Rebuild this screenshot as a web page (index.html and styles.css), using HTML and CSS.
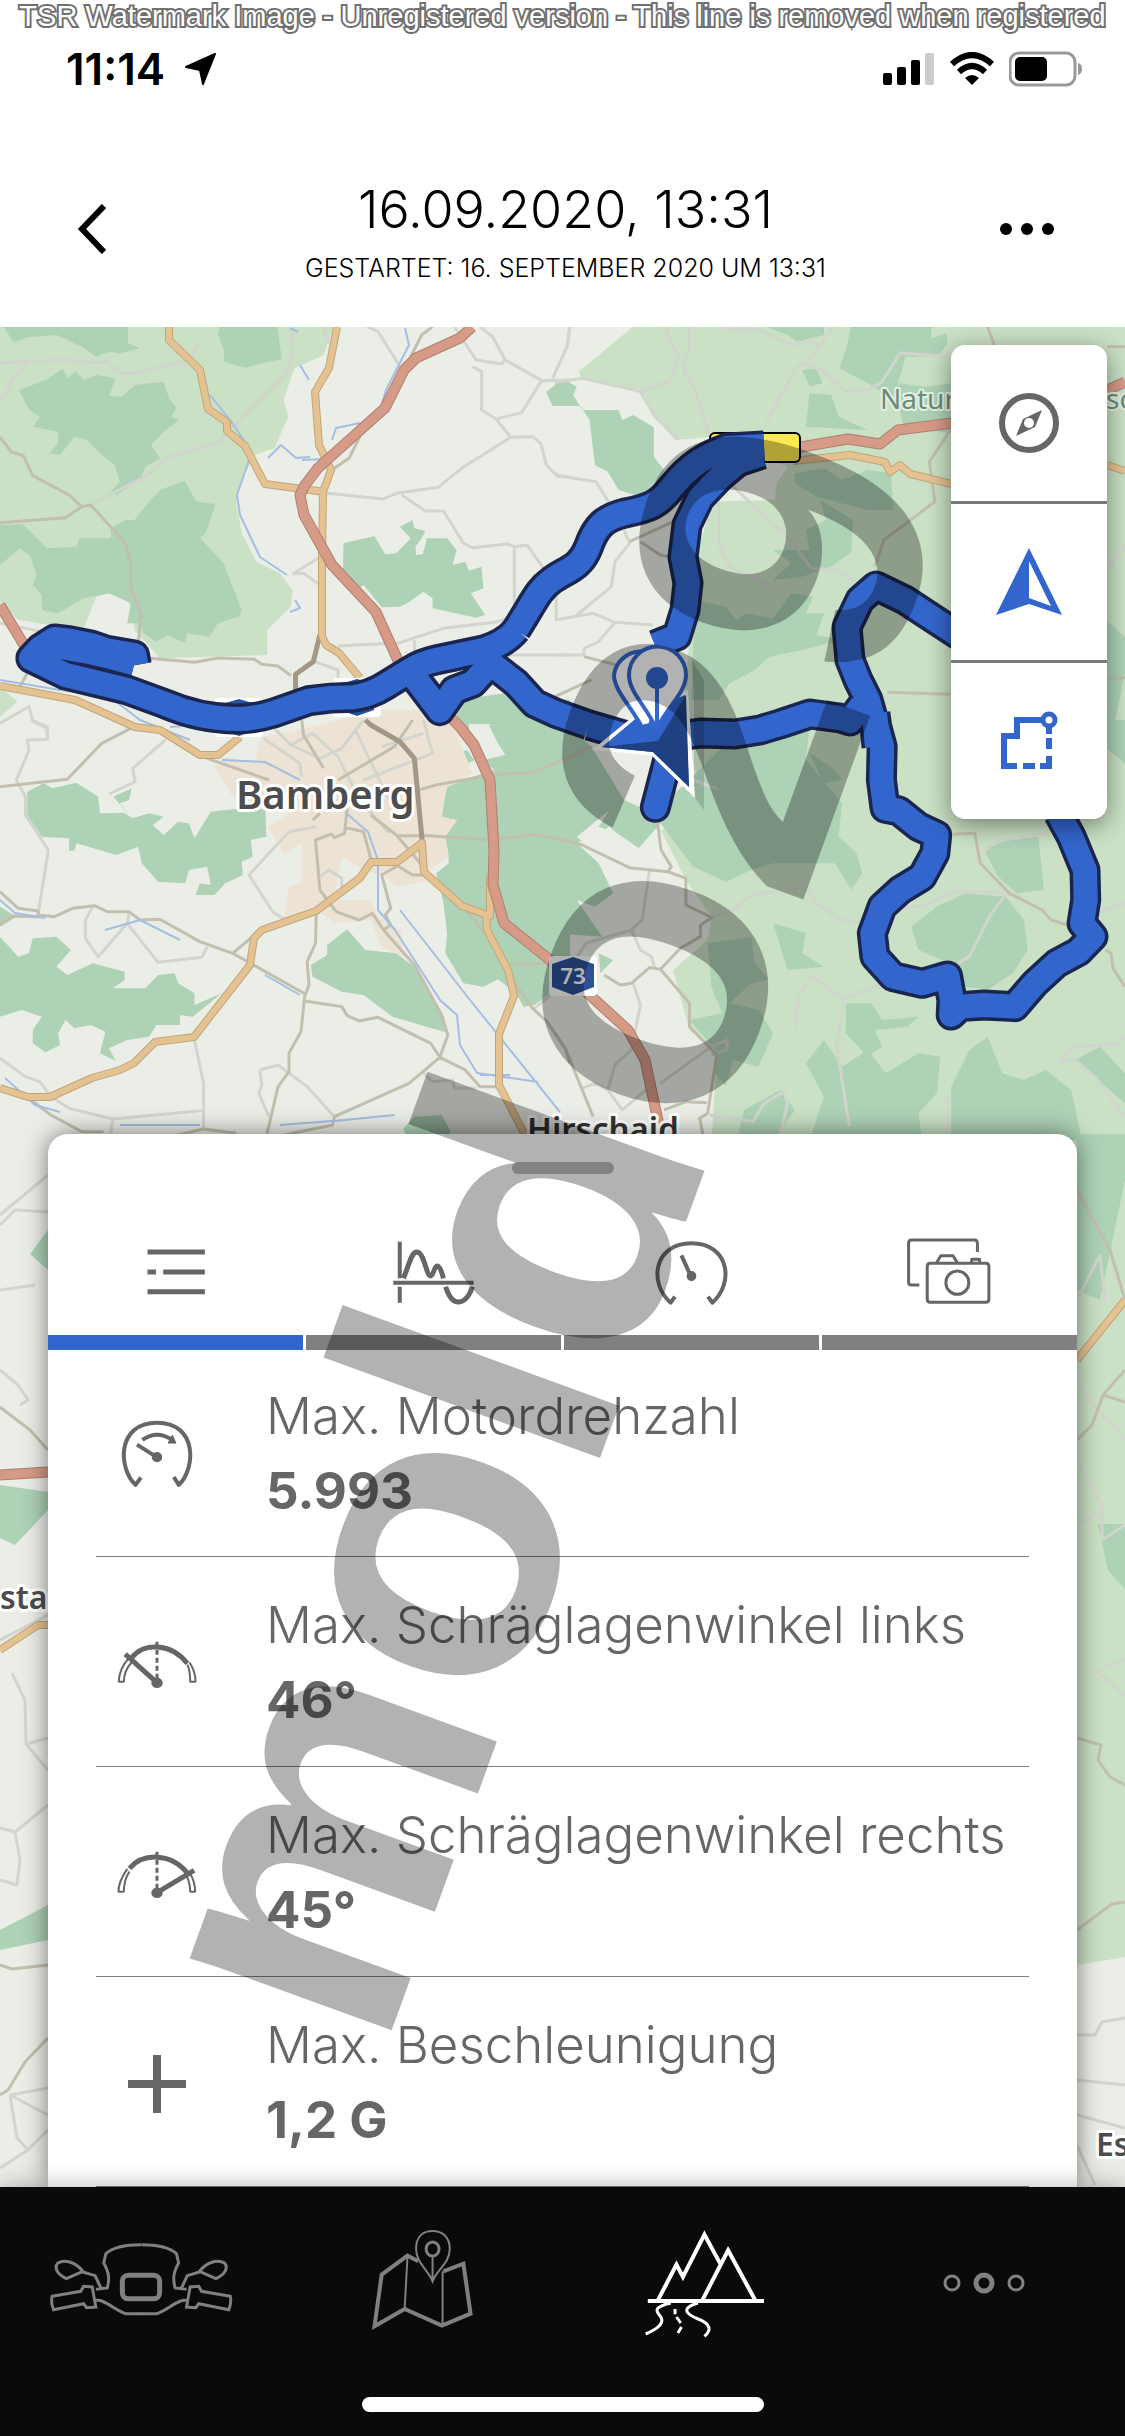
FILE: index.html
```html
<!DOCTYPE html>
<html lang="de">
<head>
<meta charset="utf-8">
<meta name="viewport" content="width=device-width, initial-scale=1">
<title>16.09.2020, 13:31</title>
<link rel="stylesheet" href="styles.css">
</head>
<body>
<p class="license">TSR Watermark Image - Unregistered version - This line is removed when registered</p>

<div class="status">
  <div class="status-side start">
    <span class="clock">11:14</span>
    <svg width="32" height="32" viewBox="0 0 32 32" aria-hidden="true"><path d="M30 1 18 31 15 17 1 14Z" stroke="#000" stroke-width="2" stroke-linejoin="round"/></svg>
  </div>
  <div class="status-side">
    <svg width="52" height="34" viewBox="0 0 52 34" aria-hidden="true"><rect y="21" width="9" height="12" rx="2"/><rect x="14" y="15" width="9" height="18" rx="2"/><rect x="28" y="8" width="9" height="25" rx="2"/><rect x="42" y="1" width="9" height="32" rx="2" fill="#ccc"/></svg>
    <svg width="46" height="34" viewBox="0 0 46 34" aria-hidden="true"><g fill="none" stroke="#000" stroke-width="6"><path d="M3 12Q23-6 43 12"/><path d="M10 20Q23 8 36 20"/></g><path d="M16 26Q23 20 30 26L23 33Z"/></svg>
    <svg width="74" height="36" viewBox="0 0 74 36" aria-hidden="true"><rect x="1" y="2" width="65" height="32" rx="9" fill="none" stroke="#999" stroke-width="3"/><rect x="6" y="6" width="32" height="24" rx="5"/><path d="M69 12Q73 13 73 18T69 24Z" fill="#999"/></svg>
  </div>
</div>

<header class="header">
  <button class="icon-btn" aria-label="Zurück"><svg width="30" height="50" viewBox="0 0 30 50"><path d="M28 2 6 25 28 48" fill="none" stroke="#000" stroke-width="6"/></svg></button>
  <div class="heading">
    <h1>16.09.2020, 13:31</h1>
    <p>GESTARTET: 16. SEPTEMBER 2020 UM 13:31</p>
  </div>
  <button class="icon-btn" aria-label="Mehr"><svg width="56" height="14" viewBox="0 0 56 14"><circle cx="7" cy="7" r="6"/><circle cx="28" cy="7" r="6"/><circle cx="49" cy="7" r="6"/></svg></button>
</header>

<main class="stage">
<svg class="map" viewBox="0 327 1125 1860" preserveAspectRatio="xMidYMin slice" aria-label="Karte">
  <defs>
    <g id="route">
      <g class="px" transform="translate(0 320) scale(.3635 .3333)">
        <path d="M375 1035 370 1005 290 990 250 975 190 962 150 957 110 985 85 1015 180 1065 350 1110 450 1150Q550 1197 650 1197 700 1197 750 1180L850 1142Q910 1132 970 1132 1020 1125 1060 1097L1130 1050Q1160 1030 1200 1020L1330 990Q1390 970 1420 930"/>
        <path d="M110 1000 150 978 240 995 300 1010 370 1030"/>
        <path d="M1125 1050 1210 1172 1250 1110 1300 1090 1350 1030 1420 1090 1470 1150 1530 1180 1620 1215"/>
      </g>
      <g class="px">
        <path d="M516 630C535 600 538 590 552 580 566 570 580 568 588 548 596 525 605 518 625 513 650 508 658 505 672 487 690 465 705 456 727 448L764 446"/>
        <path d="M762 454 738 462 720 477 700 498 687 525 683 557 688 583 685 610 677 636 655 645"/>
        <path d="M589 725 630 737 680 736 700 733 735 734 760 730 780 724 810 714 840 718 850 721 862 705"/>
        <path d="M960 636 940 623 905 600 876 586 860 600 847 627 850 660 858 680 868 700 875 725 877 747"/>
      </g>
      <g class="px" transform="translate(555 720) scale(.3635 .3333)">
        <path d="M880-20 885 20 900 80 898 180 908 265 945 272 1000 320 1050 345 1045 400 1010 470 950 510 900 560 873 640 880 710 930 770 1010 790 1080 768 1092 840 1090 885 1115 860 1180 855 1265 860 1320 790 1380 730 1440 695 1480 650 1450 610 1460 540 1458 450 1420 350 1385 280"/>
        <path d="M310 120 276 262" stroke-linecap="round"/>
      </g>
    </g>
  </defs>
  <rect y="327" width="1125" height="1860" fill="#ebeee7"/>

  <g transform="translate(0 320) scale(.3635 .3333)">
    <path class="meadow" d="M0 20H918L890 105 810 145 780 240 793 290 755 385 700 405 660 490 650 550 665 640 705 725 770 760 805 810 800 860 735 930V1005L440 1015 370 930 355 840 300 820 265 830 228 930 50 900 0 845ZM0 1100 48 1145 0 1190Z"/>
    <path class="forest" d="M10 20H352V70L385 85 330 100 300 95 265 110 225 80 155 45 75 52 38 68ZM605 20H763L775 118 720 130 675 143 615 125 618 95 600 45ZM52 210 125 180 172 148 188 175 207 152 230 180 265 165 318 175 300 228 335 230 370 195 450 185 465 235 485 265 470 290 493 300 455 330 415 375 440 415 400 440 385 480 320 525 305 515 330 485 315 435 275 400 240 360 205 350 165 405 135 400 160 370 160 335 90 320 110 290 80 270Z"/>
    <path class="forest" d="M0 615 62 612 130 685 210 680 218 655H305V625L345 600H370L410 545 440 510 508 482 540 545 593 552 565 640 550 653 615 730 665 870 660 888 600 910 575 950 515 940 510 970 460 945 430 965 395 940 385 910H350L360 850 300 820 230 835 160 880 115 870V825L90 795 100 765 85 710 55 685 0 735Z"/>
    <path class="forest" d="M945 670 1030 648 1060 703 1090 700 1130 655 1100 620 1135 600 1140 625 1170 632 1160 655 1143 680 1145 705 1163 703 1175 655H1230L1256 690 1245 735 1280 725 1290 752 1325 740 1330 805 1295 820 1335 885 1310 893 1190 865V835L1165 815 1120 850 1100 860 1050 862 1000 795 970 818 943 795ZM1502 215 1540 185H1568V258H1520ZM1250 1170 1290 1135 1390 1120 1568 1140V1260H1390V1212H1290L1290 1260Z"/>
  </g>
  <g transform="translate(555 320) scale(.3635 .3333)">
    <path class="meadow" d="M215 20H1568V1270H350L370 940 390 700 430 560 420 545 605 540 610 490 640 440 430 350 330 360 275 290 240 215 75 175 65 155Z"/>
    <path class="forest" d="M0 190 40 188 60 200 50 225 75 270H175L185 300 215 285 272 322V410L300 450 290 470 235 530 175 510 145 455 110 435 95 300 70 258H0ZM585 22H740V45L665 65 640 45ZM815 20H1035V55L1078 40 1080 70 1060 100 1020 110 965 110 945 185 935 240 860 190 783 145 800 90ZM680 150 720 145 735 190 700 200ZM700 220 760 225 780 290 860 330 690 320ZM945 190 1020 200 1089 190V340L960 320 940 240Z"/>
    <path class="forest" d="M660 460 740 445 790 480 860 450 925 460 930 570H860L720 530 660 490ZM730 540 820 600 815 695 760 740 680 770 600 780 650 730 600 690 700 690 690 630 745 600ZM385 840 470 860 500 900 525 880 600 895 650 820 710 830 690 880H740L720 945 790 960 680 990 590 1010 550 1050 480 1090 450 1140H375ZM1518 900 1568 950V1060L1530 1260H1518Z"/>
  </g>
  <g transform="translate(0 720) scale(.3635 .3333)">
    <path class="forest" d="M75 215 120 190 145 205 210 188 270 230 275 280 340 278 365 295 410 280 450 290 420 315 450 345 490 305 520 310 535 355 580 275 700 260 730 270 733 350 690 360 695 410 665 425 668 465 620 490 590 525H538L550 490 580 495 570 440 520 450 510 490 435 485 390 430 380 380 320 405 210 370 205 392H190V355L115 350 75 285ZM312 230 362 205 355 240 330 250 360 290Z"/>
    <path class="forest" d="M0 650 50 710 80 700 90 655 155 650 195 690 155 740 185 765 255 730 343 755V780L310 805H400L435 765 480 760 490 790 535 820V855L610 820 530 890 495 885V915H430L410 950 350 960 300 985 318 1022 275 1000 290 935 250 915 205 925 180 900 160 940 165 975 125 997 90 970V930L115 890 60 870 0 890ZM0 560 45 590 0 620Z"/>
    <path class="forest" d="M855 735 900 705V675L955 628 1005 690 1090 700 1140 740 1215 890 1225 937 1080 890 1000 825 940 815 860 770ZM1110 1225 1140 1190 1215 1185 1240 1235 1230 1260H1120ZM1568 0H1390L1345 15 1370 70 1390 105 1330 120 1360 150 1300 170 1230 200 1215 270V350L1230 380 1235 430 1200 460 1220 550 1230 640 1225 700 1275 790 1330 800 1370 778 1420 820 1440 860 1470 855 1515 820 1568 760ZM1258 100 1285 90 1305 120 1280 135Z"/>
    <path class="town" d="M720 50 800 35 930 0 1020-30 1230-30 1300 160 1230 200 1215 290 1258 300 1225 350 1235 410 1180 450 1190 480 1090 500 1060 470 1000 450 940 410 930 470 920 540H1020L1040 590 1105 630 1110 710 1050 680 1020 600 920 610 860 560 780 600 795 500 830 490V370L780 400 735 320 800 280 640 230 590 140 620 110 700 130Z"/>
  </g>
  <g transform="translate(555 720) scale(.3635 .3333)">
    <path class="meadow" d="M350 0H1568V1280H430L445 1000 370 930 325 750 420 660 430 590 360 480 290 330 420 300Z"/>
    <path class="forest" d="M0-20 100 80 190 240 290 255 350 200 500 40 700 20 690 120 790 250 780 350 830 400 845 460 815 510 770 430 600 430 540 450 470 485 380 440 290 310 230 385 170 340 150 320 60 370 120 430 160 520 110 560 60 540 0 530ZM700 100 760 140 790 180 740 190Z"/>
    <path class="forest" d="M420 670 540 650 550 730 590 780 540 790 480 850 560 870 600 940 560 1040 490 1020 470 1100 440 1060 450 1000 370 900 460 880 430 800ZM600 610 690 640 680 700 740 740 640 750ZM1180 390 1240 360 1330 350 1345 510 1270 520 1220 470ZM980 620 1050 560 1130 520 1240 530 1290 600 1300 690 1260 760 1190 810 1130 800 1110 740 1000 690ZM800 850 870 850 900 900 1000 890 970 920 880 930 900 980 860 1010 800 940ZM690 1030 740 960 790 1040 860 990 910 1060 1000 1000 1060 1010 1050 1120 1000 1180 1010 1260H700L740 1130ZM1090 1100 1140 990 1190 950 1230 1060 1290 1080 1350 1050 1420 1110 1450 1260H1090ZM1430 1020 1500 980 1568 1060V1150ZM520 1170 620 1110 660 1170 600 1260H500ZM1490 0H1568V130L1510 80Z"/>
    <path class="land" d="M190 240 230 140 300 180 310 260 250 270ZM60 350 150 270 120 320 170 340 230 385 290 330 360 480 200 440 130 410Z"/>
    <path class="forest" d="M120 700 160 720 125 760ZM0 530 60 540 130 650 0 640Z"/>
  </g>
  <path class="meadow" d="M1077 1134H1125V1957L1077 1965Z"/>
  <path class="forest" d="M1077 1134H1125V1180L1100 1300 1077 1290ZM1098 1524H1125V1590L1108 1570ZM0 1485 48 1492V1510L15 1545 0 1538ZM0 1930 48 1905V1940L0 1950ZM30 1254 48 1230V1270Z"/>

  <g class="px minor" transform="translate(0 320) scale(.3635 .3333)">
    <path d="M0 130 180 118 265 130 295 125 335 160 370 160 520 120 545 75M80 130 40 165 15 225 0 235M255 550 400 470 465 410 600 370 640 320 790 160 805 90 800 20M890 20 905 70M1010 20 1040 35 1095 130M1250 20 1310 120 1380 132 1390 120 1355 50 1320 20M1300 140 1325 155V270L1365 297 1435 278 1490 182 1390 120M1490 182 1568 180M1520 175 1560 80 1568 20M1365 297 1405 352 1270 445 1205 502 1090 520 1055 537 900 520M1405 352 1465 350 1488 370 1503 435 1535 470H1568M1105 525 1170 573H1220L1275 670 1300 683 1395 672 1415 680V890M1415 680 1450 675 1530 800V900M805 762 875 715M805 762 835 760 880 795M930 978 1100 968 1220 925 1360 907 1450 880M1140 960V1010M1370 1005H1568M0 910 130 938M865 1025 930 1050V1080M0 1210 80 1160 90 1205 130 1225V1260"/>
    <path class="lane" d="M0 350 30 395 65 408 90 467 190 525 225 560 250 555 345 670 360 730V805L388 880 380 980M0 608 180 593 225 560M405 1014 535 1027 600 1014 700 1018 720 1033 765 1038 800 1067M75 1060 50 1110M990 350 960 415 900 460M1190 20 1160 45 1130 110"/>
    <path class="trunk" d="M880 945 862 1025 813 1063V1110"/>
  </g>
  <g class="px minor" transform="translate(555 320) scale(.3635 .3333)">
    <path d="M40 20 35 75 0 160M0 187 75 175 235 215 320 180 340 110 300 20M368 20V100L352 120 360 165 385 210 425 350M235 215 275 290 340 360M470 25 560 30 650 75 710 65 735 85M765 20 720 90 660 150 580 310M680 130 740 155 800 215 860 210 900 185 950 98 1090 110M0 460 15 468 112 485 150 550M0 900 105 880 165 907 270 915M165 907 120 965 80 985V1005M0 1005H80M190 630 205 670 165 725 155 800 60 885M450 520V670L480 740 600 800M480 490 640 650 705 745 770 750 820 780M1519 750 1568 680"/>
    <path class="lane" d="M205 665 325 605M235 665 290 705 315 710M80 1010 170 1035M0 1130 100 1080M1190 20 1208 75M1519 80H1568M1088 330 1030 425 1045 545 905 660 880 740M915 1117 1089 1123M1519 1078 1568 1073"/>
  </g>
  <g class="px minor" transform="translate(0 720) scale(.3635 .3333)">
    <path d="M85 0 130 20V58L75 60 80 90 45 180 70 230V285L133 390 105 580M455 60 365 145 372 185 300 222M255 560 235 600V655L270 710 350 610 435 727 555 712 570 680M350 610 355 580M535 960 560 1090V1230M0 1015 70 1070 110 1085 140 1130 190 1165 310 1197 555 1172M310 1197 305 1240M870 320 795 335 685 465 750 575 785 600M715 1050 765 1035 845 1100 920 1190M715 1050 720 1095 712 1120 740 1190M725 55 825 130 830 170M755 25 800 75 880 115 940 85 1000 0M800 75 860 40 930 110 990 240 1070 340M1165 0 1190 100 1000 180M980 35 1070 240M1165 40 1050 80M880 470 905 450 940 475V520M1165 1060 1190 1085 1245 1080 1250 1105H1310M1470 865 1515 825"/>
    <path class="lane" d="M0 200 185 178 280 70 360 25M570 115 740 180M830 0 835 45 890 145M0 515 50 565 105 573V590L35 588 0 615M105 585 150 590 200 565 260 557 295 575H355L385 600 440 598 550 665 640 700 840 822M640 700 700 645M870 580 868 670 845 725 850 795 838 830 828 935 795 1000V1055L765 1100 735 1240M838 843 940 860 955 887 988 903 1040 892 1185 970 1210 1012 1280 1050 1320 1100H1375M1210 1012 1125 1090 920 1190 915 1215 780 1245M1210 1012 1232 945 1215 885 1140 735 1055 630 1025 580 988 600 925 575 880 510 868 360 912 342 920 353 948 340 955 265M1055 630 1075 615 1060 585 1075 565 1050 465 1090 440M1135 0 1085 80 930 180M1135 215 1200 195 1350 165 1465 157 1568 110M1090 347H1180L1350 360 1470 343 1568 365M1020 285 1090 345 1165 440M1020 415 1000 335 945 322M1090 435 1135 465H1175M1280 570 1335 640M1400 733 1520 730M1410 780 1465 865 1505 905 1555 985 1568 1030M85 1140 140 1185 225 1235H285M490 1245 560 1227 650 1240M860 300 880 280"/>
    <path class="trunk" d="M1005 0 1020 15 1100 65 1140 115 1162 370"/>
  </g>
  <g class="px minor" transform="translate(555 720) scale(.3635 .3333)">
    <path d="M260 450 240 600 210 630 85 670 55 720M210 630 235 690 265 710 275 745M215 790 235 855 210 990 165 1035 145 1110 185 1170 250 1110M75 1105 110 1090 145 1110M290 1090 430 980 475 960 470 990 430 1005M430 590 490 570 540 525 690 500 720 550 780 597 850 610M960 565 1020 555 1105 512 1245 518 1200 580 1140 710 1110 730M705 770 795 835 775 980 810 1220M705 770 670 830 660 925M795 835 890 795M1180 395 1210 365 1350 340M1500 575 1568 550M425 1185 545 1205 575 1150 630 1115 640 1150 620 1240M1085 1130 1080 1240M1390 1025 1420 980 1550 970 1568 950M1390 1025 1425 1015 1490 1075 1568 1190M380 180 450 208"/>
    <path class="lane" d="M0 130 100 80M282 310 292 390 320 440 310 455M0 355 75 375 205 443 310 455 360 475V555L432 593 400 615V650L345 685 290 748 260 743 210 790 180 795 135 765M290 748 370 850V920L445 1005 420 1180 398 1195 408 1250M0 940 30 990 105 1190M300 1170 360 1145 418 1148M1095 343 1155 340 1170 430 1250 520 1340 570 1365 600 1410 615M1515 690 1530 700 1535 745 1568 800"/>
  </g>
  <g class="px minor">
    <path d="M48 1175 0 1215M0 1225 15 1210 48 1212M0 1290 35 1285M0 1370 18 1385 28 1400 20 1405M0 1640 48 1615M12 1673 25 1700 26 1744 48 1738M26 1744 48 1770M0 1828 15 1832 48 1805M15 1832 20 1860 17 1885 0 1880M10 2095 48 2088M10 2095 17 2138 28 2150 48 2130M10 2095 48 2115M28 2150 0 2168M1077 1462 1102 1505V1540L1125 1525M1102 1510 1077 1525M1096 1671 1125 1660M1096 1671 1125 1695M1077 2035H1095L1102 2022 1125 2018M1077 2080 1125 2085M1077 2115 1125 2128M1077 2145 1095 2185M1077 1300 1100 1255 1105 1300M1077 1385 1125 1440"/>
    <path class="lane" d="M0 1407 30 1430 48 1450M48 2038 25 2062 8 2090 0 2095M0 1965 12 1969 48 1965M1077 1440 1092 1425 1103 1395 1125 1370M1103 1395 1125 1402M1077 1190 1110 1250 1125 1300M1077 1738 1101 1745 1098 1760 1110 1777 1125 1785M1077 1930 1112 1904 1125 1902"/>
  </g>

  <g class="px water">
    <path d="M210 395 230 420 245 442M249 460 237 495 240 515 260 557 287 575M302 460 325 459M290 328 298 332M300 365 309 380M405 328 409 345 386 390 380 410M332 440 336 428 360 423M268 458 281 445 296 458 310 457M0 680 60 690 110 697 140 720 190 740M170 727 210 724M295 600 300 608 290 612"/>
    <path d="M222 760 265 762 300 780M345 812 368 832 378 860V910L395 930 440 1000 457 1015 460 1045 477 1073 538 1082M400 910 470 1000 560 1112M480 1075 510 1075M120 1125H200M280 1125 345 1120 395 1115M5 1078 35 1105 60 1112M0 900 15 913 45 918M265 975 300 995M105 930 140 920 180 940"/>
  </g>
  <g class="px">
    <path id="main-roads" class="road-edge" d="M169 327V340L200 370 208 409 227 422V431L245 446 265 484 325 492M337 327 329 368 315 392 319 445 331 470 323 492 322 560V636L326 645 339 653 360 678M0 686 75 700 135 727 160 730 200 755H218L240 737M0 1088 28 1097H50L92 1078 120 1070 134 1063 155 1042 194 1037 250 965 254 938 262 930 316 911 360 878 371 862H397L422 843 424 872 462 906 490 916V875M486 913 487 930 508 970 514 996 499 1034V1085L525 1135M0 1650 38 1625H48M1077 1360 1125 1300M793 461 850 455 885 462 890 472 900 465 910 474 960 486M1107 465 1125 471"/>
    <path class="orange" d="M169 327V340L200 370 208 409 227 422V431L245 446 265 484 325 492M337 327 329 368 315 392 319 445 331 470 323 492 322 560V636L326 645 339 653 360 678M0 686 75 700 135 727 160 730 200 755H218L240 737M0 1088 28 1097H50L92 1078 120 1070 134 1063 155 1042 194 1037 250 965 254 938 262 930 316 911 360 878 371 862H397L422 843 424 872 462 906 490 916V875M486 913 487 930 508 970 514 996 499 1034V1085L525 1135M0 1650 38 1625H48M1077 1360 1125 1300M793 461 850 455 885 462 890 472 900 465 910 474 960 486M1107 465 1125 471"/>
    <path class="red-edge" d="M472 327 460 338 416 358 404 370 385 408 318 468 305 485 300 495 304 515 332 565 376 612 400 665 460 727 474 745 490 780 494 850 493 885 504 923 560 968 628 1030 645 1060 660 1130M0 605 30 655M795 448 848 439 880 444 898 430 960 422M1107 390 1125 382M0 1475 48 1472"/>
    <path class="red" d="M472 327 460 338 416 358 404 370 385 408 318 468 305 485 300 495 304 515 332 565 376 612 400 665 460 727 474 745 490 780 494 850 493 885 504 923 560 968 628 1030 645 1060 660 1130M0 605 30 655M795 448 848 439 880 444 898 430 960 422M1107 390 1125 382M0 1475 48 1472"/>
  </g>

  <rect x="215" y="698" width="48" height="39" rx="4" fill="#fff"/><path d="M222 704 239 699 256 704V730L239 736 222 730Z" fill="#27529d"/>
  <rect x="333" y="678" width="48" height="39" rx="4" fill="#fff"/><path d="M340 684 357 679 374 684V710L357 716 340 710Z" fill="#27529d"/>
  <rect x="710" y="433" width="90" height="29" rx="5" fill="#fce94f" stroke="#000" stroke-width="2"/>
  <use href="#route" class="route-edge"/>
  <use href="#route" class="route-fill"/>

  <rect x="549" y="956" width="48" height="40" rx="4" fill="#fff"/><path d="M552 964 573 957 594 964V987L573 995 552 987Z" fill="#2c5197"/>
  <text x="573" y="984" text-anchor="middle" class="label shield">73</text>

  <path d="M692 660 704 680V810L694 797V700Z" fill="#000" opacity=".15"/>
  <path d="M592 750 630 719 688 690 695 798 651 755Z" fill="#fff"/>
  <path d="M602 747 640 715 685 695 689 787 653 752Z" fill="#3064c8"/><path d="M602 747 658 741 689 787 653 752ZM658 741 686 695 689 787Z" fill="#1f4181"/>
  <path d="M642 727C630 705 614 690 614 675A27 27 0 0 1 667 672C668 690 656 706 650 725Z" fill="#fff" stroke="#3266cc" stroke-width="4"/>
  <path d="M656 728C646 706 629 692 629 675A28 28 0 0 1 686 675C686 692 668 706 657 728Z" fill="#fff" stroke="#3266cc" stroke-width="4"/>
  <circle cx="657" cy="678" r="11" fill="#3266cc"/><path d="M657 680V728" stroke="#3266cc" stroke-width="4"/>

  <text x="236" y="809" class="label city">Bamberg</text>
  <text x="527" y="1141" class="label town-name">Hirschaid</text>
  <text x="880" y="409" class="label park">Natur</text>
  <text x="1106" y="409" class="label park">sc</text>
  <text x="0" y="1609" class="label village">sta</text>
  <text x="1096" y="2156" class="label village">Es</text>
</svg>

<div class="map-tools">
  <button aria-label="Kompass"><svg width="60" height="60" viewBox="0 0 60 60"><circle cx="30" cy="30" r="27" fill="none" stroke="#666" stroke-width="6"/><path fill="#666" fill-rule="evenodd" d="M43 17 36 34 17 43 24 26ZM30 25A5 5 0 1 0 30 35 5 5 0 0 0 30 25Z"/></svg></button>
  <button aria-label="Position"><svg width="66" height="70" viewBox="0 0 66 70"><path fill="#36c" fill-rule="evenodd" d="M33 1 66 68 33 57 0 68ZM33 14V51L55 59Z"/></svg></button>
  <button aria-label="Route"><svg width="60" height="60" viewBox="0 0 60 60"><g fill="none" stroke="#36c" stroke-width="6"><path d="M42 9H18V25H5V55H18M24 55H36M41 55H50V45M50 38V27M50 23V15"/><circle cx="50" cy="9" r="6" stroke-width="5"/></g></svg></button>
</div>

<section class="sheet">
  <div class="handle"></div>
  <nav class="tabs">
    <button class="tab active" aria-label="Liste"><svg width="90" height="70" viewBox="181 351 125.5 210" preserveAspectRatio="none" class="ico w5"><path d="M204 396H284M204 456H216M226 456H284M204 515H284"/></svg></button>
    <button class="tab" aria-label="Verlauf"><svg width="90" height="70" viewBox="541 351 125.5 210" preserveAspectRatio="none" class="ico w4"><path d="M556 365V475M547 488H659M556 500V548"/><path d="M561 475C570 430 572 396 580 396 590 396 593 468 599 468 603 468 604 438 608 438 612 438 615 460 617 475M620 500C625 535 632 546 638 546 648 546 655 520 657 500" stroke-width="5"/></svg></button>
    <button class="tab" aria-label="Instrumente"><svg width="90" height="70" viewBox="901 351 125.5 210" preserveAspectRatio="none" class="ico w4"><path d="M940 530 934 548C903 490 910 370 963 370 1016 370 1023 490 992 548L986 530M949 406 962 468"/><ellipse cx="963" cy="468" rx="4" ry="9" fill="#666"/></svg></button>
    <button class="tab" aria-label="Bilder"><svg width="90" height="70" viewBox="1261 351 125.5 210" preserveAspectRatio="none" class="ico w3"><path d="M1281 495H1270Q1266 495 1266 486V370Q1266 360 1270 360H1358Q1362 360 1362 370V396M1296 430H1374Q1378 430 1378 440V537Q1378 547 1374 547H1296Q1292 547 1292 537V440Q1292 430 1296 430ZM1305 428 1311 407H1328L1334 428M1354 425V418H1365V425"/><ellipse cx="1334" cy="488" rx="16" ry="35"/></svg></button>
  </nav>
  <ul class="stats">
    <li>
      <svg width="90" height="70" viewBox="313 73 252 134" preserveAspectRatio="none" class="ico w4"><path d="M394 187 379 201C330 170 325 82 439 82 553 82 548 170 500 201L486 186M383 124 438 148M398 115Q439 95 482 115"/><path d="M470 121 482 106 492 121Z" fill="#666" stroke-width="1"/><ellipse cx="439" cy="148" rx="9" ry="6" fill="#666"/></svg>
      <div><p class="name">Max. Motordrehzahl</p><p class="value">5.993</p></div>
    </li>
    <li>
      <svg width="90" height="70" viewBox="313 472 252 134" preserveAspectRatio="none" class="ico w5"><path d="M370 530C400 502 478 502 524 542M350 524 438 578"/><path d="M439 500V577" stroke-width="3" stroke-dasharray="5 3"/><path d="M332 578C332 560 342 545 362 530M346 578C346 560 356 548 370 538M332 577H346M524 544C530 552 532 565 532 578M530 540C540 550 547 565 547 578M532 577H547" stroke-width="2"/><ellipse cx="439" cy="579" rx="9" ry="5" fill="#666"/></svg>
      <div><p class="name">Max. Schräglagenwinkel links</p><p class="value">46°</p></div>
    </li>
    <li>
      <svg width="90" height="70" viewBox="313 472 252 134" preserveAspectRatio="none" class="ico w5"><g transform="translate(878) scale(-1 1)"><path d="M354 541C400 502 478 502 516 532M335 536 438 578"/><path d="M439 500V577" stroke-width="3" stroke-dasharray="5 3"/><path d="M332 578C332 565 337 552 348 540M346 578C346 565 350 555 356 546M332 577H346M516 538C530 552 532 565 532 578M522 533C540 550 547 565 547 578M532 577H547" stroke-width="2"/><ellipse cx="439" cy="579" rx="9" ry="5" fill="#666"/></g></svg>
      <div><p class="name">Max. Schräglagenwinkel rechts</p><p class="value">45°</p></div>
    </li>
    <li>
      <svg width="90" height="70" viewBox="0 0 90 70" class="ico w8"><path d="M16 37H74M45 8V66"/></svg>
      <div><p class="name">Max. Beschleunigung</p><p class="value">1,2 G</p></div>
    </li>
  </ul>
</section>
</main>

<footer class="bottom">
  <nav class="main-nav">
    <a href="#fahrzeug" aria-label="Fahrzeug"><svg width="190" height="120" viewBox="63.500 130 265 360" preserveAspectRatio="none" class="ico w3"><g id="bar"><path d="M133 329 149 325C152 300 152 280 144 250L147 222C157 202 175 195 196 195M133 362C145 358 155 385 174 402H197M80 250C90 238 105 248 115 275L92 297C80 285 74 265 80 250ZM115 277 132 288 140 325M72 350 112 335 116 320 128 322 133 382 120 384 116 372 74 390C71 375 71 360 72 350Z"/></g><use href="#bar" transform="translate(392.500) scale(-1 1)"/><rect x="170" y="287" width="52" height="70" rx="8" ry="18" stroke-width="5"/></svg></a>
    <a href="#navigation" aria-label="Navigation"><svg width="110" height="120" viewBox="511.500 130 153.500 360" preserveAspectRatio="none" class="ico w3"><path d="M583 245 568 228 532 285 522 440 564 388 616 438 656 402 646 252 618 275" stroke-width="4"/><path d="M568 230 564 388M617 275V438M603 305C597 270 580 250 580 208 580 170 590 154 603 154 616 154 627 170 627 208 627 250 609 270 603 305ZM603 232V305" stroke-width="2"/><ellipse cx="603" cy="208" rx="9" ry="21"/></svg></a>
    <a href="#touren" aria-label="Touren" class="current"><svg width="124" height="120" viewBox="893.500 130 173 360" preserveAspectRatio="none" class="ico w4"><path d="M903 364H1065M917 362 943 255 952 292 982 165 1004 252M979 362 1015 212 1053 362"/><path d="M935 370C905 385 918 400 922 415 926 435 912 452 900 463M973 370C950 385 955 400 970 415 995 435 990 455 982 470M941 388V404M943 412 949 430M950 442 945 460" stroke-width="3"/></svg></a>
    <a href="#mehr" aria-label="Mehr"><svg width="88" height="24" viewBox="0 0 88 24" class="ico w3"><circle cx="12" cy="12" r="7"/><circle cx="44" cy="12" r="8" stroke-width="5"/><circle cx="76" cy="12" r="7"/></svg></a>
  </nav>
  <div class="home"></div>
</footer>

<svg class="watermark" viewBox="0 0 1125 2436" aria-hidden="true"><text transform="translate(382 2057) rotate(-70)">moldo29</text></svg>
</body>
</html>
```
FILE: styles.css
```css
* { box-sizing: border-box; margin: 0; padding: 0; }
body {
  position: relative;
  display: flex;
  flex-direction: column;
  min-height: 100vh;
  background: #fff;
  color: #000;
  font-family: Inter, "Liberation Sans", sans-serif;
  overflow-x: hidden;
}
button { border: 0; background: none; font: inherit; cursor: pointer; }
svg { display: block; }

.license {
  height: 36px;
  text-align: center;
  white-space: nowrap;
  font: 29px/32px "Liberation Sans", sans-serif;
  color: #fff;
  -webkit-text-stroke: 4px #707070;
  paint-order: stroke fill;
}

.status {
  display: flex;
  justify-content: space-between;
  align-items: center;
  height: 66px;
  padding: 0 42px 0 66px;
}
.status-side { display: flex; align-items: center; gap: 14px; }
.status-side.start { gap: 20px; }
.clock { font-size: 44px; font-weight: 600; line-height: 48px; }

.header {
  display: flex;
  justify-content: space-between;
  align-items: center;
  height: 225px;
  padding: 48px 70px 6px 76px;
}
.icon-btn { display: flex; width: 56px; height: 80px; padding-bottom: 14px; align-items: center; }
.heading { text-align: center; }
.heading h1 { font-size: 52px; font-weight: 300; line-height: 64px; }
.heading p { font-size: 25px; font-weight: 300; line-height: 52px; }

.stage {
  position: relative;
  flex: 1;
  display: flex;
  padding: 807px 48px 0;
  overflow: hidden;
}
.map { position: absolute; inset: 0; width: 100%; height: 100%; }
.px path { vector-effect: non-scaling-stroke; fill: none; stroke-linejoin: round; }
.land { fill: #ebeee7; }
.meadow { fill: #cae1c5; }
.forest { fill: #add2b6; }
.town { fill: #ede3d5; }
.minor { stroke: #d2d5cd; stroke-width: 3px; }
.lane { stroke: #c2bfae; stroke-width: 3px; }
.trunk { stroke: #a39885; stroke-width: 5px; }
.water { stroke: #a4bee3; stroke-width: 2px; }
.road-edge { stroke: #c1a57a; stroke-width: 8px; }
.orange { stroke: #e4c292; stroke-width: 6px; }
.red-edge { stroke: #b07e70; stroke-width: 11px; }
.red { stroke: #d69b87; stroke-width: 9px; }
.route-edge { stroke: #1a2650; stroke-width: 31px; }
.route-fill { stroke: #3366cc; stroke-width: 24px; }

.label {
  font-family: "Noto Sans", sans-serif;
  font-weight: 600;
  fill: #4d4d4d;
  stroke: #fff;
  stroke-width: 6px;
  stroke-linejoin: round;
  paint-order: stroke fill;
}
.city { font-size: 40px; }
.town-name { font-size: 33px; fill: #333; }
.village { font-size: 32px; }
.park { font-size: 28px; font-weight: 400; fill: #6a8c78; stroke: #e4f0e1; stroke-width: 4px; }
.shield { font-size: 22px; fill: #fff; stroke: none; }

.map-tools {
  position: absolute;
  top: 18px;
  right: 18px;
  width: 156px;
  background: #fff;
  border-radius: 14px;
  box-shadow: 0 6px 24px rgba(0, 0, 0, .45);
}
.map-tools button {
  display: flex;
  align-items: center;
  justify-content: center;
  width: 100%;
  height: 156px;
}
.map-tools button + button { height: 159px; border-top: 3px solid #7a7a7a; }

.sheet {
  position: relative;
  flex: 1;
  background: #fff;
  border-radius: 20px 20px 0 0;
  box-shadow: 0 0 24px rgba(0, 0, 0, .5);
}
.handle { width: 102px; height: 12px; margin: 28px auto 0; border-radius: 6px; background: #bababa; }
.tabs { display: grid; grid-template-columns: repeat(4, 1fr); gap: 3px; }
.tab {
  display: flex;
  justify-content: center;
  align-items: flex-end;
  height: 176px;
  padding-bottom: 28px;
  border-bottom: 15px solid #808080;
}
.tab.active { border-color: #3366cc; }

.ico { fill: none; stroke: #666; stroke-linejoin: round; }
.ico * { vector-effect: non-scaling-stroke; }
.w3 { stroke-width: 3px; }
.w4 { stroke-width: 4px; }
.w5 { stroke-width: 5px; }
.w8 { stroke-width: 8px; }

.stats { list-style: none; padding: 0 48px; color: #666; }
.stats li {
  display: flex;
  align-items: center;
  gap: 64px;
  height: 210px;
  padding-left: 16px;
  border-bottom: 1px solid #808080;
}
.stats li:first-child { height: 207px; }
.stats svg { flex: none; }
.name, .value { font-size: 51px; line-height: 75px; white-space: nowrap; }
.name { font-weight: 300; }
.value { font-weight: 700; }

.bottom {
  position: relative;
  height: 249px;
  background: #0a0a0a;
  box-shadow: 0 0 24px rgba(0, 0, 0, .3);
}
.main-nav { display: grid; grid-template-columns: repeat(4, 1fr); padding-top: 36px; }
.main-nav a { display: flex; align-items: center; justify-content: center; height: 120px; }
.main-nav .ico { stroke: #808080; stroke-linejoin: miter; }
.main-nav .current .ico { stroke: #fff; }
.home { width: 402px; height: 15px; margin: 54px auto 0; border-radius: 8px; background: #fff; }

.watermark {
  position: absolute;
  top: 0;
  left: 0;
  width: 100%;
  pointer-events: none;
}
.watermark text { font: bold 406px "Liberation Sans", sans-serif; fill: rgba(0, 0, 0, .3); }
```
